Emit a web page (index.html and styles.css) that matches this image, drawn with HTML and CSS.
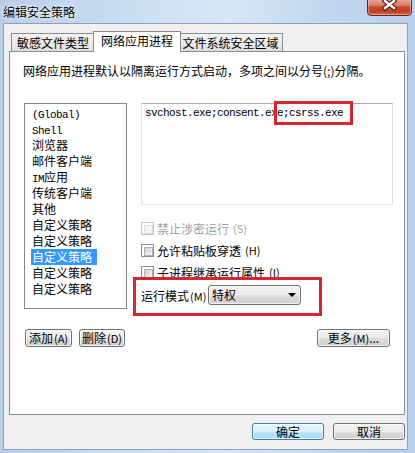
FILE: index.html
```html
<!DOCTYPE html>
<html lang="zh-CN">
<head>
<meta charset="UTF-8" />
<title>编辑安全策略</title>
<link rel="stylesheet" href="styles.css">
</head>
<body>
<div class="window">
  <div class="titlebar">
    <span class="title">编辑安全策略</span>
    <button class="close-btn" aria-label="关闭">
      <svg width="45" height="18" viewBox="0 0 45 18">
        <path d="M18 4 L27 11 M27 4 L18 11" stroke="#4f1c12" stroke-width="4.6" stroke-linecap="square" fill="none"/>
        <path d="M18 4 L27 11 M27 4 L18 11" stroke="#fff" stroke-width="2.4" stroke-linecap="square" fill="none"/>
      </svg>
    </button>
  </div>

  <div class="client">
    <div class="tabs">
      <div class="tab tab-1">敏感文件类型</div>
      <div class="tab tab-2 active">网络应用进程</div>
      <div class="tab tab-3">文件系统安全区域</div>
    </div>

    <div class="panel">
      <p class="desc">网络应用进程默认以隔离运行方式启动，多项之间以分号(;)分隔。</p>

      <div class="main-row">
        <ul class="policy-list">
          <li><span class="mono">(Global)</span></li>
          <li><span class="mono">Shell</span></li>
          <li>浏览器</li>
          <li>邮件客户端</li>
          <li><span class="mono">IM</span>应用</li>
          <li>传统客户端</li>
          <li>其他</li>
          <li>自定义策略</li>
          <li>自定义策略</li>
          <li class="selected">自定义策略</li>
          <li>自定义策略</li>
          <li>自定义策略</li>
        </ul>

        <div class="right-col">
          <div class="edit-box mono">svchost.exe;consent.exe;csrss.exe</div>

          <label class="check-row disabled"><span class="check"></span>禁止涉密运行<span class="key">(S)</span></label>
          <label class="check-row"><span class="check"></span>允许粘贴板穿透<span class="key">(H)</span></label>
          <label class="check-row"><span class="check"></span>子进程继承运行属性<span class="key">(I)</span></label>

          <div class="mode-row">
            <span class="mode-label">运行模式<span class="key">(M)</span></span>
            <div class="combo">特权<span class="arrow"></span></div>
          </div>

          <!-- 红框标注 -->
          <div class="mark mark-1"></div>
          <div class="mark mark-2"></div>
        </div>
      </div>

      <div class="btn-row">
        <button class="btn btn-add">添加<span class="key">(A)</span></button>
        <button class="btn btn-del">删除<span class="key">(D)</span></button>
        <button class="btn btn-more">更多<span class="key">(M)</span>...</button>
      </div>
    </div>

    <div class="dialog-btns">
      <button class="btn btn-default">确定</button>
      <button class="btn">取消</button>
    </div>
  </div>
</div>
</body>
</html>
```

FILE: styles.css
```css
/* Reset */
* {
  margin: 0;
  padding: 0;
  box-sizing: border-box;
}

body {
  font-family: "Noto Sans CJK SC", "Liberation Sans", sans-serif;
  font-size: 12px;
  color: #000;
  background: #fff;
}

.window {
  width: 415px;
  height: 453px;
  display: flex;
  flex-direction: column;
  position: relative;
  overflow: hidden;
  background: linear-gradient(90deg, #b7cee9 0%, #cddff2 35%, #d8e6f5 55%, #c1d6ee 80%, #b9d0ea 100%);
}

/* Title bar */
.titlebar {
  height: 23px;
  padding-left: 3px;
  display: flex;
  align-items: center;
}

.title {
  line-height: 16px;
  text-shadow: 0 0 6px rgba(255, 255, 255, 0.95), 0 0 2px #fff;
}

.close-btn {
  position: absolute;
  top: -3px;
  right: 3px;
  width: 45px;
  height: 19px;
  border: 1px solid #6b2418;
  border-radius: 0 0 4px 4px;
  background: linear-gradient(180deg, #eab0a2 0%, #dc806b 40%, #c8482d 55%, #c24126 80%, #d76a48 100%);
  box-shadow: inset 0 0 0 1px rgba(255, 220, 210, 0.45);
  cursor: pointer;
}

.close-btn svg {
  position: absolute;
  left: -1px;
  top: -1px;
}

/* Client area */
.client {
  flex: 1;
  margin: 0 7px 3px 3px;
  border: 1px solid #8ba3c1;
  background: #f0f0f0;
  padding-top: 7px;
  display: flex;
  flex-direction: column;
}

.tabs {
  display: flex;
  align-items: flex-end;
  height: 21px;
  margin: 0 2px -1px 5px;
  padding-left: 2px;
  position: relative;
  z-index: 1;
}

.tab {
  height: 19px;
  border: 1px solid #898c95;
  background: linear-gradient(180deg, #f3f3f3 0%, #ebebeb 50%, #dedede 100%);
  text-align: center;
  line-height: 17px;
  white-space: nowrap;
}

.tab-1 {
  width: 84px;
}

.tab-2 {
  width: 84px;
}

.tab-3 {
  width: 105px;
  margin-left: -1px;
}

.tab.active {
  width: 88px;
  height: 21px;
  margin: 0 -2px;
  border-bottom: none;
  background: #fff;
  line-height: 18px;
  position: relative;
  z-index: 2;
}

.panel {
  height: 364px;
  margin: 0 2px 0 5px;
  border: 1px solid #898c95;
  background: #fff;
  padding: 11px 11px 0 14px;
}

.desc {
  line-height: 16px;
  margin-left: -1px;
  white-space: nowrap;
}

.main-row {
  display: flex;
  gap: 14px;
  margin-top: 24px;
}

.mono {
  font-family: "Liberation Mono", monospace;
  font-size: 11px;
  letter-spacing: -0.6px;
}

/* 策略列表 */
.policy-list {
  list-style: none;
  width: 103px;
  height: 206px;
  border: 1px solid #828790;
  padding: 1px 0 0 6px;
}

.policy-list li {
  width: max-content;
  line-height: 16px;
  height: 16px;
  padding: 0 5px 0 1px;
  white-space: nowrap;
}

.policy-list li.selected {
  background: #3399ff;
  color: #fff;
}

.right-col {
  width: 252px;
  position: relative;
}

.edit-box {
  height: 102px;
  border: 1px solid #e3e9ef;
  border-top-color: #abadb3;
  border-left-color: #e2e3ea;
  border-right-color: #dbdfe6;
  padding: 1px 3px;
  line-height: 16px;
  margin-bottom: 12px;
}

.check-row {
  height: 22px;
  display: flex;
  align-items: center;
  gap: 3px;
  white-space: nowrap;
}

.check {
  width: 13px;
  height: 13px;
  border: 1px solid #8e8f8f;
  background: #fff;
  padding: 2px;
}

.check::after {
  content: "";
  display: block;
  width: 7px;
  height: 7px;
  border: 1px solid #aeb2b8;
  background: linear-gradient(135deg, #cdd0d4 0%, #e6e7e9 60%, #f4f4f4 100%);
}

.check-row.disabled {
  color: #a0a0a0;
}

.check-row.disabled .check {
  border-color: #c2c2c2;
}

.check-row.disabled .check::after {
  border-color: #dcdcdc;
  background: #f4f4f4;
}

.key {
  font-size: 11px;
  margin-left: 1px;
}

.mode-row {
  display: flex;
  align-items: center;
  height: 20px;
  margin-top: 2px;
}

.mode-label {
  width: 67px;
  white-space: nowrap;
}

.combo {
  width: 93px;
  height: 20px;
  border: 1px solid #707070;
  border-radius: 3px;
  background: linear-gradient(180deg, #f2f2f2 0%, #ebebeb 50%, #dddddd 50%, #cfcfcf 100%);
  box-shadow: inset 0 0 0 1px rgba(255, 255, 255, 0.7);
  padding: 0 4px 0 3px;
  display: flex;
  align-items: center;
  justify-content: space-between;
  line-height: 16px;
}

.arrow {
  width: 0;
  height: 0;
  border-left: 4px solid transparent;
  border-right: 4px solid transparent;
  border-top: 4px solid #000;
}

/* 红框标注 */
.mark {
  position: absolute;
  border: 3px solid #d9262e;
}

.mark-1 {
  left: 133px;
  top: -2px;
  width: 79px;
  height: 24px;
}

.mark-2 {
  left: -8px;
  top: 174px;
  width: 189px;
  height: 39px;
}

/* Buttons */
.btn {
  height: 18px;
  border: 1px solid #707070;
  border-radius: 3px;
  background: linear-gradient(180deg, #f2f2f2 0%, #ebebeb 50%, #dddddd 50%, #cfcfcf 100%);
  box-shadow: inset 0 0 0 1px rgba(255, 255, 255, 0.75);
  font-family: inherit;
  font-size: 12px;
  line-height: 14px;
  color: #000;
  white-space: nowrap;
}

.btn-row {
  display: flex;
  margin-top: 20px;
  padding-left: 1px;
  padding-right: 3px;
}

.btn-add {
  width: 47px;
}

.btn-del {
  width: 46px;
  margin-left: 7px;
}

.btn-more {
  width: 73px;
  margin-left: auto;
}

.dialog-btns {
  display: flex;
  justify-content: flex-end;
  gap: 9px;
  margin-top: 8px;
  padding-right: 2px;
}

.dialog-btns .btn {
  width: 72px;
  height: 17px;
}

.btn-default {
  border-color: #3c7fb1;
  background: linear-gradient(180deg, #eaf6fd 0%, #d9f0fc 50%, #bee6fd 50%, #a7d9f5 100%);
}
```
